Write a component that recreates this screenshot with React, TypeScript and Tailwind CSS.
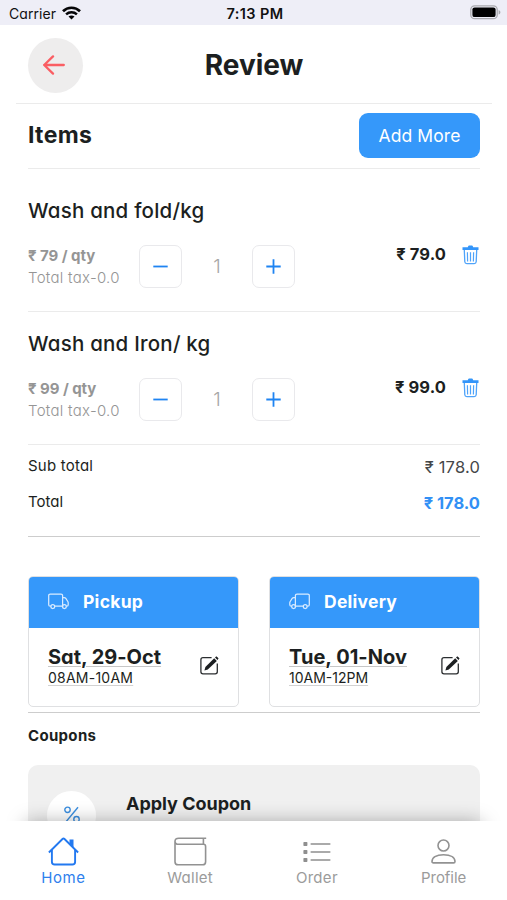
import type { ReactNode } from "react";

function WifiIcon() {
  return (
    <svg width="19" height="14" viewBox="0 0 19 14" fill="none" stroke="#050507">
      <path d="M1 5.2C5.700.600 13.300.600 18 5.200" strokeWidth="2.700" />
      <path d="M4.100 8.400c3-2.800 7.800-2.800 10.800 0" strokeWidth="2.500" />
      <path d="M9.500 13.500 6.500 10.600c1.800-1.500 4.200-1.500 6 0z" fill="#050507" stroke="none" />
    </svg>
  );
}

function BatteryIcon() {
  return (
    <svg width="31" height="15" viewBox="0 0 31 15" fill="none">
      <rect x=".8" y=".8" width="26.4" height="12.900" rx="3.800" stroke="#a9a9ae" strokeWidth="1.300" />
      <rect x="2.400" y="2.400" width="23.200" height="9.700" rx="2.200" fill="#000" />
      <path d="M28.600 5v4.600c2.400-.8 2.400-3.800 0-4.600z" fill="#a9a9ae" />
    </svg>
  );
}

function TrashIcon() {
  return (
    <svg width="17" height="20" viewBox="0 0 17 20" fill="none" stroke="#4ea3fa">
      <path d="M.5 2.300h5.300C6 1 6.600.4 7.400.4h2.200c.8 0 1.400.6 1.600 1.900h5.300v2.800H.5z" fill="#3395fa" stroke="none" />
      <path d="m2.300 5 .5 11.800c.1 1.200.8 1.900 2 1.900h7.400c1.200 0 1.900-.7 2-1.900L14.700 5" strokeWidth="1.300" />
      <path d="m5.400 7.200.2 9.200M8.500 7.200v9.200M11.600 7.200l-.2 9.200" strokeWidth="1.200" />
    </svg>
  );
}

function TruckIcon({ flipped = false }: { flipped?: boolean }) {
  return (
    <svg className={flipped ? "-scale-x-100" : ""} width="21" height="17" viewBox="0 0 21 17" fill="none" stroke="#d9ebff" strokeWidth="1.250">
      <path d="M2.900 13.200h-.7c-1 0-1.500-.6-1.500-1.500V2.600C.7 1.600 1.200 1 2.200 1H13c1 0 1.600.6 1.600 1.600v10.600H6.700" />
      <path d="M14.600 4.500h1.600c.7 0 1.200.3 1.600.9l2 3.100c.3.500.4.900.4 1.400v1.800c0 .9-.5 1.500-1.400 1.500h-.4" />
      <circle cx="4.800" cy="13.600" r="1.900" />
      <circle cx="16.400" cy="13.600" r="1.900" />
    </svg>
  );
}

function EditIcon() {
  return (
    <svg width="19" height="19" viewBox="0 0 19 19" fill="none">
      <path d="M11.600 1.700H3C1.600 1.700.9 2.400.9 3.800v12c0 1.400.7 2.100 2.100 2.100h12.200c1.400 0 2.100-.7 2.100-2.100V7.400" stroke="#2b2e30" strokeWidth="1.300" />
      <path d="m14.200 2.300 2.600 2.600-9 8.700-3.400 1 1-3.500z" fill="#1c1f21" />
      <path d="m15 1.500.8-.8c.4-.4.8-.4 1.200 0l1.200 1.200c.4.4.4.8 0 1.200l-.7.8z" fill="#1c1f21" />
    </svg>
  );
}

function HomeIcon() {
  return (
    <svg width="31" height="29" viewBox="0 0 31 29" fill="none" stroke="#2379f0" strokeWidth="1.900">
      <path d="M3.900 12.500v12.200c0 1.900 1 2.800 2.800 2.800h17.600c1.800 0 2.800-.9 2.800-2.800V12.500" />
      <path d="M.9 15.500 14.500 2c.7-.7 1.300-.7 2 0l13.600 13.500" />
      <path d="M21.500 2.500h4v8.200l-4-4z" fill="#2379f0" stroke="none" />
    </svg>
  );
}

function WalletIcon() {
  return (
    <svg width="33" height="29" viewBox="0 0 33 29" fill="none" stroke="#929292" strokeWidth="1.600">
      <path d="M32.200 1.200H4.800C2.400 1.200 1 2.400 1 4.200s1.400 3.100 3.800 3.100h24.700c1.400 0 2.100.7 2.100 2.100v15.300c0 2-1.100 3.100-3.100 3.100H4.200C2.100 27.800 1 26.700 1 24.700V4.200" />
      <path d="M29.400 1.200v6.100" />
    </svg>
  );
}

function OrderIcon() {
  return (
    <svg width="28" height="22" viewBox="0 0 28 22" fill="#8f8f8f">
      <rect x=".4" y="1" width="4" height="4" rx=".7" />
      <rect x=".4" y="9" width="4" height="4" rx=".7" />
      <rect x=".4" y="17" width="4" height="4" rx=".7" />
      <path d="M8.200 3h18.600M8.200 11h18.600M8.200 19h18.600" stroke="#8f8f8f" strokeWidth="1.600" strokeLinecap="round" />
    </svg>
  );
}

function ProfileIcon() {
  return (
    <svg width="25" height="25" viewBox="0 0 25 25" fill="none" stroke="#929292" strokeWidth="1.600">
      <circle cx="12.500" cy="6.500" r="5.500" />
      <path d="M1 22.500C1 18.600 5 15.700 12.500 15.700S24 18.600 24 22.500c0 .9-.5 1.400-1.400 1.400H2.400c-.9 0-1.400-.5-1.400-1.400z" />
    </svg>
  );
}

function StepButton({ plus = false }: { plus?: boolean }) {
  return (
    <button className="flex size-[43px] items-center justify-center rounded-[7px] border-[1.5px] border-[#e9e9ec] bg-white">
      <svg width="15" height="15" viewBox="0 0 15 15" stroke="#1f84f2" strokeWidth="1.800">
        <path d={plus ? "M.3 7.500h14.400M7.500.3v14.400" : "M.3 7.500h14.400"} />
      </svg>
    </button>
  );
}

type Item = { name: string; rate: string; price: string };

function ItemRow({ name, rate, price }: Item) {
  return (
    <section className="h-[133px] border-b-[1.5px] border-[#ebebeb] pt-[17px]">
      <h3 className="h-[30px] whitespace-pre text-[20.500px] font-[450] leading-[29px] tracking-[0.220px]">{name}</h3>
      <div className="mt-[19px] flex">
        <div className="w-[111px] whitespace-nowrap text-[#959595]">
          <p className="h-[21px] text-[15px] font-bold leading-[21px] -tracking-[0.050px]">{rate}</p>
          <p className="mt-px text-[15px] font-light leading-[21px] tracking-[0.280px]">Total tax-0.0</p>
        </div>
        <StepButton />
        <span className="w-[70px] pt-[8px] text-center text-[19px] font-light leading-[28px] text-[#a5a5a5]">1</span>
        <StepButton plus />
        <span className="ml-auto text-[16.500px] font-bold leading-[18px] tracking-[0.080px]">{price}</span>
        <span className="ml-[16px] mr-px"><TrashIcon /></span>
      </div>
    </section>
  );
}

type Slot = { title: string; date: string; time: string; dateClass: string; timeClass: string; titleClass: string; flipped?: boolean };

function SlotCard({ title, date, time, dateClass, timeClass, titleClass, flipped }: Slot) {
  return (
    <article className="h-[131px] w-[211px] overflow-hidden rounded-[5px] border border-[#dfe0e2] bg-white">
      <header className="flex h-[51px] items-center gap-[14px] bg-[#3598fa] pl-[19px] text-white">
        <span className="-mt-[3px]"><TruckIcon flipped={flipped} /></span>
        <h3 className={`text-[17.500px] font-bold ${titleClass}`}>{title}</h3>
      </header>
      <div className="flex h-[75px] items-center justify-between pl-[19px] pr-[19px]">
        <div className="whitespace-nowrap">
          <p className={`text-[20px] font-bold leading-[25px] underline decoration-[#c7c7c7] decoration-1 underline-offset-[2px] ${dateClass}`}>{date}</p>
          <p className={`-mt-px text-[14px] leading-[18px] underline decoration-[#d2d2d2] decoration-1 underline-offset-[2px] ${timeClass}`}>{time}</p>
        </div>
        <EditIcon />
      </div>
    </article>
  );
}

function Tab({ label, icon, active = false, labelClass }: { label: string; icon: ReactNode; active?: boolean; labelClass: string }) {
  return (
    <a className={`flex flex-1 flex-col items-center pt-[15px] ${active ? "text-[#2e80ed]" : "text-[#9b9b9b]"}`}>
      <span className="flex h-[31px] items-center">{icon}</span>
      <span className={`text-[15px] leading-[22px] ${labelClass}`}>{label}</span>
    </a>
  );
}

export default function App() {
  return (
    <div className="flex h-[900px] w-[507px] flex-col overflow-hidden bg-white font-['Inter','Liberation_Sans',sans-serif] text-[#1c1f21] [font-feature-settings:'cv11']">
      <div className="grid h-[25px] shrink-0 grid-cols-3 items-center bg-[#eeeef7] pl-[9px] pr-[6px] text-[14px] leading-[20px] text-[#111]">
        <div className="flex items-center gap-[6px] pt-[2px]">
          <span className="tracking-[0.070px]">Carrier</span>
          <span className="-mt-[2px]"><WifiIcon /></span>
        </div>
        <span className="pt-[3px] text-center text-[14.500px] font-semibold tracking-[0.400px]">7:13 PM</span>
        <span className="justify-self-end"><BatteryIcon /></span>
      </div>

      <header className="ml-[16px] mr-[15px] grid h-[79px] shrink-0 grid-cols-[1fr_auto_1fr] items-center border-b-[1.500px] border-[#ebebeb] px-[12px] pt-[2px]">
        <button className="flex size-[55px] items-center justify-center rounded-full bg-[#eeeded]">
          <svg className="-ml-[3px]" width="22" height="20" viewBox="0 0 22 20" fill="none" stroke="#fa5e63" strokeWidth="2.300" strokeLinecap="round" strokeLinejoin="round">
            <path d="M20.800 10H1.200M10 1.400 1.200 10l8.800 8.600" />
          </svg>
        </button>
        <h1 className="text-[28px] font-bold tracking-[-0.050px]">Review</h1>
      </header>

      <main className="min-h-0 flex-1 overflow-hidden pl-[28px] pr-[27px]">
        <div className="flex h-[65px] items-center justify-between border-b-[1.500px] border-[#ebebeb]">
          <h2 className="-mt-[2px] text-[23px] font-bold tracking-[0.320px]">Items</h2>
          <button className="-mt-px h-[45px] w-[121px] rounded-[9px] bg-[#3598fa] pt-px text-[17.500px] tracking-[0.100px] text-white">Add More</button>
        </div>

        <div className="pt-[10px]">
          <ItemRow name="Wash and fold/kg" rate="₹ 79 / qty" price="₹ 79.0" />
          <ItemRow name="Wash and Iron/ kg" rate="₹ 99 / qty" price="₹ 99.0" />
        </div>

        <dl className="h-[92px] border-b-[1.500px] border-[#cdcdcd] pt-[5px] text-[15px]">
          <div className="flex h-[35px] items-center justify-between">
            <dt className="-mt-[2px] tracking-[0.220px]">Sub total</dt>
            <dd className="text-[16.500px] tracking-[0.180px] text-[#454749]">₹ 178.0</dd>
          </div>
          <div className="flex h-[35px] items-center justify-between pt-px">
            <dt className="-mt-[2px]">Total</dt>
            <dd className="text-[16.500px] font-bold text-[#3290f5]">₹ 178.0</dd>
          </div>
        </dl>

        <div className="flex h-[176px] justify-between border-b-[1.500px] border-[#cdcdcd] pt-[39px]">
          <SlotCard title="Pickup" date="Sat, 29-Oct" time="08AM-10AM" titleClass="tracking-[0.280px]" dateClass="tracking-[-0.020px]" timeClass="tracking-[0.240px]" />
          <SlotCard title="Delivery" date="Tue, 01-Nov" time="10AM-12PM" titleClass="tracking-[0.250px]" dateClass="tracking-[0.030px]" timeClass="tracking-normal" flipped />
        </div>

        <h2 className="mt-[13px] text-[15px] font-bold leading-[20px] tracking-[0.320px]">Coupons</h2>
        <div className="mt-[19px] flex h-[90px] rounded-[10px] bg-[#f0f0f0] pl-[19px]">
          <span className="mt-[26px] flex size-[49px] items-center justify-center rounded-full bg-white pb-[2px]">
            <svg width="16" height="17" viewBox="0 0 16 17" fill="none" stroke="#3c8fe0" strokeWidth="1.400">
              <circle cx="3.500" cy="3.800" r="2.700" />
              <circle cx="12.500" cy="13.200" r="2.700" />
              <path d="M14 1.200 2 15.800" />
            </svg>
          </span>
          <div className="ml-[30px] pt-[28px]">
            <h3 className="text-[18px] font-bold leading-[22px] tracking-[-0.020px]">Apply Coupon</h3>
          </div>
        </div>
      </main>

      <nav className="relative flex h-[79px] shrink-0 bg-white">
        <div className="pointer-events-none absolute inset-x-0 -top-[20px] h-[20px] overflow-hidden">
          <div className="absolute inset-x-[26px] top-[22px] h-[20px] shadow-[0_0_20px_0px_rgba(0,0,0,0.36)]" />
        </div>
        <Tab label="Home" icon={<HomeIcon />} labelClass="tracking-[0.500px]" active />
        <Tab label="Wallet" icon={<WalletIcon />} labelClass="tracking-[0.300px]" />
        <Tab label="Order" icon={<OrderIcon />} labelClass="tracking-[0.300px]" />
        <Tab label="Profile" icon={<ProfileIcon />} labelClass="-tracking-[0.050px]" />
      </nav>
    </div>
  );
}
